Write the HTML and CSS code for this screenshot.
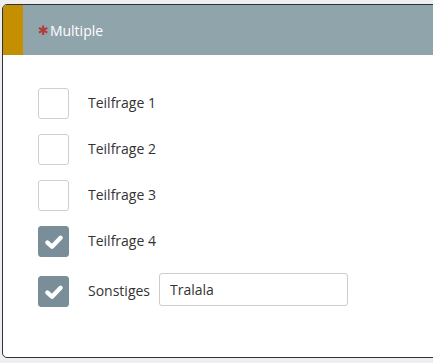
FILE: index.html
```html
<!DOCTYPE html>
<html lang="de">

<head>
    <meta charset="UTF-8">
    <meta name="viewport" content="width=device-width, initial-scale=1.0">
    <title>Multiple</title>
    <link rel="stylesheet" href="styles.css">
</head>

<body>

    <div class="question">
        <div class="question-header">
            <div class="marker"></div>
            <h3 class="title"><span class="required">&#10033;</span>Multiple</h3>
        </div>

        <div class="options">
            <label class="option">
                <span class="box"></span>
                <span class="label-text">Teilfrage 1</span>
            </label>
            <label class="option">
                <span class="box"></span>
                <span class="label-text">Teilfrage 2</span>
            </label>
            <label class="option">
                <span class="box"></span>
                <span class="label-text">Teilfrage 3</span>
            </label>
            <label class="option">
                <span class="box checked">
                    <svg viewBox="0 0 20 20" width="22" height="22"><path d="M4 10.5 L8.2 14.3 L16 6.2" fill="none" stroke="#fff" stroke-width="4" stroke-linecap="round" stroke-linejoin="round"/></svg>
                </span>
                <span class="label-text">Teilfrage 4</span>
            </label>
            <label class="option other-row">
                <span class="box checked">
                    <svg viewBox="0 0 20 20" width="22" height="22"><path d="M4 10.5 L8.2 14.3 L16 6.2" fill="none" stroke="#fff" stroke-width="4" stroke-linecap="round" stroke-linejoin="round"/></svg>
                </span>
                <span class="label-text">Sonstiges</span>
                <input class="other-input" type="text" value="Tralala">
            </label>
        </div>
    </div>

</body>

</html>
```

FILE: styles.css
```css
* {
    box-sizing: border-box;
}

body {
    margin: 0;
    background-color: #efeeef;
    font-family: 'Open Sans', 'Noto Sans', sans-serif;
    overflow: hidden;
}

.question {
    width: 460px;
    margin-top: 4px;
    margin-left: 2px;
    background-color: white;
    border: 1px solid #2b3340;
    border-radius: 5px 0 0 5px;
    overflow: hidden;
}

.question-header {
    display: flex;
    height: 50px;
    background-color: #90a4ac;
}

.marker {
    width: 20px;
    background-color: #c48f00;
}

.title {
    margin: 0;
    padding-left: 15px;
    display: flex;
    align-items: center;
    font-size: 14px;
    font-weight: 400;
    color: white;
}

.required {
    color: #b23a3a;
    font-family: 'DejaVu Sans', sans-serif;
    font-size: 13px;
    margin-right: 1px;
}

.options {
    display: flex;
    flex-direction: column;
    gap: 15px;
    padding: 33px 0 50px 35px;
}

.option {
    display: flex;
    align-items: center;
    min-height: 31px;
}

.box {
    width: 31px;
    height: 31px;
    flex-shrink: 0;
    border: 1px solid #cfcfcf;
    border-radius: 3px;
    display: flex;
    align-items: center;
    justify-content: center;
}

.box.checked {
    background-color: #7a8e99;
    border-color: #7a8e99;
}

.label-text {
    margin-left: 19px;
    margin-bottom: 3px;
    font-size: 14px;
    color: #333;
}

.other-row {
    align-items: flex-start;
}

.other-row .box {
    margin-top: 4px;
}

.other-row .label-text {
    margin-top: 9px;
}

.other-input {
    margin-left: 9px;
    margin-top: 1px;
    width: 189px;
    height: 33px;
    padding: 0 10px;
    border: 1px solid #cccccc;
    border-radius: 3px;
    font-family: inherit;
    font-size: 14px;
    color: #333;
}
```
